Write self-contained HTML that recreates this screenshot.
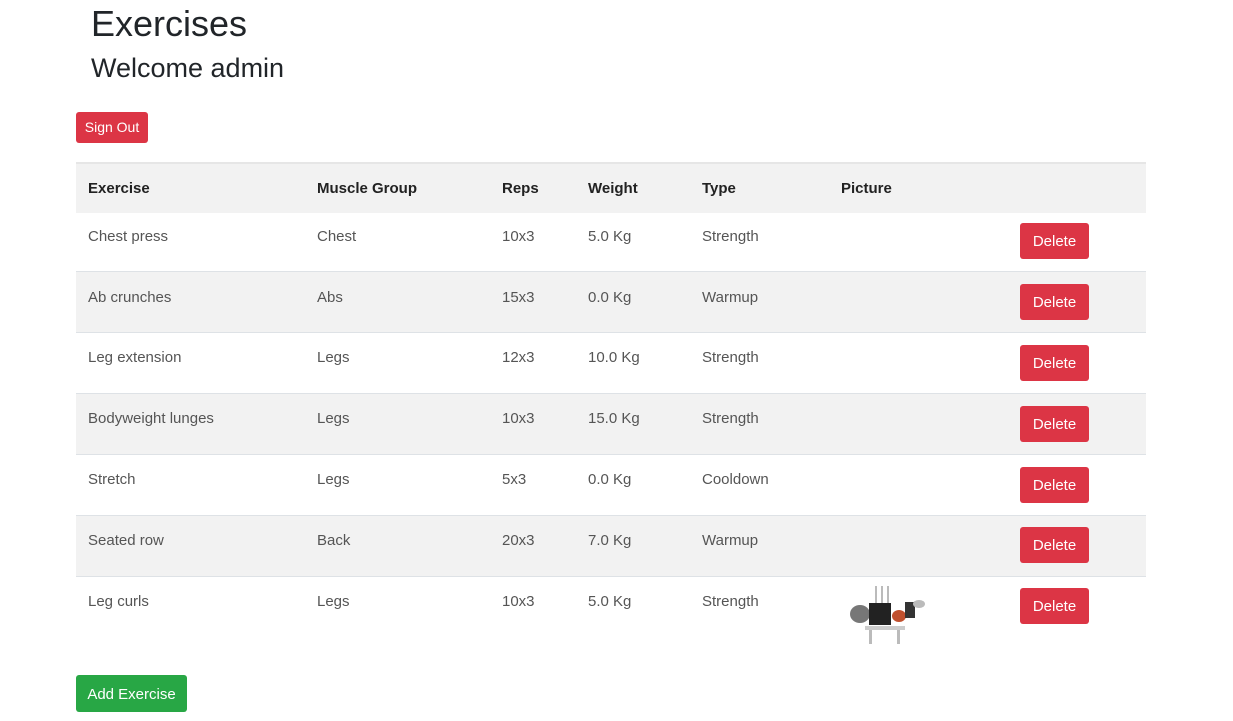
<!DOCTYPE html>
<html><head><style>
body{margin:0;width:1233px;height:721px;background:#fff;font-family:"Liberation Sans",sans-serif;color:#212529;position:relative;overflow:hidden}
.a{position:absolute;white-space:nowrap}
h1{position:absolute;left:91px;top:3px;margin:0;font-size:36px;font-weight:500}
h2{position:absolute;left:91px;top:53px;margin:0;font-size:27px;font-weight:500}
.btn{position:absolute;color:#fff;border-radius:3px;text-align:center;font-size:15px}
.red{background:#dc3545}
.row{position:absolute;left:76px;width:1070px;height:61px;border-top:1px solid #dee2e6}
.g{background:#f2f2f2}
.c{position:absolute;font-size:15px;color:#555}
.h{position:absolute;font-size:15px;font-weight:bold;color:#222}
</style></head><body>
<h1>Exercises</h1>
<h2>Welcome admin</h2>
<div class="btn red" style="left:76px;top:112px;width:72px;height:31px;line-height:31px;font-size:14px">Sign Out</div>
<div class="row g" style="top:162px;height:49px;border-top:2px solid #e6e6e6"></div>
<div class="h" style="left:88px;top:180px">Exercise</div>
<div class="h" style="left:317px;top:180px">Muscle Group</div>
<div class="h" style="left:502px;top:180px">Reps</div>
<div class="h" style="left:588px;top:180px">Weight</div>
<div class="h" style="left:702px;top:180px">Type</div>
<div class="h" style="left:841px;top:180px">Picture</div>

<div class="row" style="top:211px;border-top:none"></div>
<div class="row g" style="top:271px"></div>
<div class="row" style="top:332px"></div>
<div class="row g" style="top:393px"></div>
<div class="row" style="top:454px"></div>
<div class="row g" style="top:515px"></div>
<div class="row" style="top:576px;height:75px"></div>

<div class="c" style="left:88px;top:228px">Chest press</div><div class="c" style="left:317px;top:228px">Chest</div><div class="c" style="left:502px;top:228px">10x3</div><div class="c" style="left:588px;top:228px">5.0 Kg</div><div class="c" style="left:702px;top:228px">Strength</div>
<div class="c" style="left:88px;top:289px">Ab crunches</div><div class="c" style="left:317px;top:289px">Abs</div><div class="c" style="left:502px;top:289px">15x3</div><div class="c" style="left:588px;top:289px">0.0 Kg</div><div class="c" style="left:702px;top:289px">Warmup</div>
<div class="c" style="left:88px;top:349px">Leg extension</div><div class="c" style="left:317px;top:349px">Legs</div><div class="c" style="left:502px;top:349px">12x3</div><div class="c" style="left:588px;top:349px">10.0 Kg</div><div class="c" style="left:702px;top:349px">Strength</div>
<div class="c" style="left:88px;top:410px">Bodyweight lunges</div><div class="c" style="left:317px;top:410px">Legs</div><div class="c" style="left:502px;top:410px">10x3</div><div class="c" style="left:588px;top:410px">15.0 Kg</div><div class="c" style="left:702px;top:410px">Strength</div>
<div class="c" style="left:88px;top:471px">Stretch</div><div class="c" style="left:317px;top:471px">Legs</div><div class="c" style="left:502px;top:471px">5x3</div><div class="c" style="left:588px;top:471px">0.0 Kg</div><div class="c" style="left:702px;top:471px">Cooldown</div>
<div class="c" style="left:88px;top:532px">Seated row</div><div class="c" style="left:317px;top:532px">Back</div><div class="c" style="left:502px;top:532px">20x3</div><div class="c" style="left:588px;top:532px">7.0 Kg</div><div class="c" style="left:702px;top:532px">Warmup</div>
<div class="c" style="left:88px;top:593px">Leg curls</div><div class="c" style="left:317px;top:593px">Legs</div><div class="c" style="left:502px;top:593px">10x3</div><div class="c" style="left:588px;top:593px">5.0 Kg</div><div class="c" style="left:702px;top:593px">Strength</div>

<div class="btn red" style="left:1020px;top:223px;width:69px;height:36px;line-height:38px">Delete</div>
<div class="btn red" style="left:1020px;top:284px;width:69px;height:36px;line-height:38px">Delete</div>
<div class="btn red" style="left:1020px;top:345px;width:69px;height:36px;line-height:38px">Delete</div>
<div class="btn red" style="left:1020px;top:406px;width:69px;height:36px;line-height:38px">Delete</div>
<div class="btn red" style="left:1020px;top:467px;width:69px;height:36px;line-height:38px">Delete</div>
<div class="btn red" style="left:1020px;top:527px;width:69px;height:36px;line-height:38px">Delete</div>
<div class="btn red" style="left:1020px;top:588px;width:69px;height:36px;line-height:38px">Delete</div>

<svg class="a" style="left:845px;top:586px" width="82" height="62" viewBox="0 0 82 62">
<rect x="30" y="0" width="2" height="20" fill="#bbb"/><rect x="36" y="0" width="2" height="20" fill="#bbb"/><rect x="42" y="0" width="2" height="20" fill="#bbb"/>
<ellipse cx="15" cy="28" rx="10" ry="9" fill="#777"/>
<rect x="24" y="17" width="22" height="22" fill="#222"/>
<ellipse cx="54" cy="30" rx="7" ry="6" fill="#c0502e"/>
<rect x="60" y="16" width="10" height="16" fill="#333"/>
<ellipse cx="74" cy="18" rx="6" ry="4" fill="#bbb"/>
<rect x="20" y="40" width="40" height="4" fill="#ccc"/><rect x="24" y="44" width="3" height="14" fill="#bbb"/><rect x="52" y="44" width="3" height="14" fill="#bbb"/>
</svg>

<div class="btn" style="left:76px;top:675px;width:111px;height:37px;line-height:39px;background:#28a745">Add Exercise</div>
</body></html>
